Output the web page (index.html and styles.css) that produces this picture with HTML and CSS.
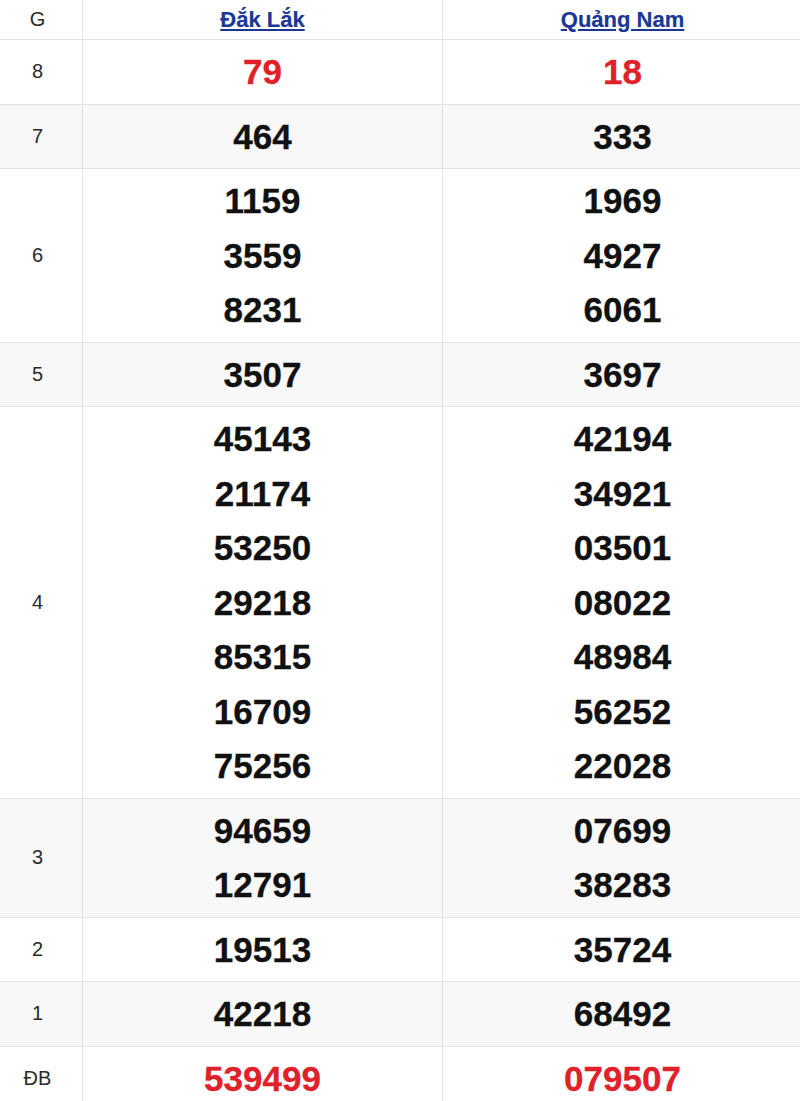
FILE: index.html
```html
<!DOCTYPE html>
<html lang="vi">
<head>
<meta charset="utf-8">
<title>Kết quả xổ số</title>
<link rel="stylesheet" href="styles.css">
</head>
<body>
<table class="kq">
  <thead>
    <tr>
      <th class="lbl">G</th>
      <th class="prov"><a href="#">Đắk Lắk</a></th>
      <th class="prov"><a href="#">Quảng Nam</a></th>
    </tr>
  </thead>
  <tbody>
    <tr>
      <td class="lbl">8</td>
      <td class="num red"><div>79</div></td>
      <td class="num red"><div>18</div></td>
    </tr>
    <tr>
      <td class="lbl">7</td>
      <td class="num"><div>464</div></td>
      <td class="num"><div>333</div></td>
    </tr>
    <tr>
      <td class="lbl">6</td>
      <td class="num"><div>1159</div><div>3559</div><div>8231</div></td>
      <td class="num"><div>1969</div><div>4927</div><div>6061</div></td>
    </tr>
    <tr>
      <td class="lbl">5</td>
      <td class="num"><div>3507</div></td>
      <td class="num"><div>3697</div></td>
    </tr>
    <tr>
      <td class="lbl">4</td>
      <td class="num"><div>45143</div><div>21174</div><div>53250</div><div>29218</div><div>85315</div><div>16709</div><div>75256</div></td>
      <td class="num"><div>42194</div><div>34921</div><div>03501</div><div>08022</div><div>48984</div><div>56252</div><div>22028</div></td>
    </tr>
    <tr>
      <td class="lbl">3</td>
      <td class="num"><div>94659</div><div>12791</div></td>
      <td class="num"><div>07699</div><div>38283</div></td>
    </tr>
    <tr>
      <td class="lbl">2</td>
      <td class="num"><div>19513</div></td>
      <td class="num"><div>35724</div></td>
    </tr>
    <tr>
      <td class="lbl">1</td>
      <td class="num"><div>42218</div></td>
      <td class="num"><div>68492</div></td>
    </tr>
    <tr>
      <td class="lbl">ĐB</td>
      <td class="num red"><div>539499</div></td>
      <td class="num red"><div>079507</div></td>
    </tr>
  </tbody>
</table>
</body>
</html>
```

FILE: styles.css
```css
html, body {
  margin: 0;
  padding: 0;
  background: #ffffff;
  overflow: hidden;
}

body {
  font-family: Arial, "Liberation Sans", Helvetica, sans-serif;
  color: #000;
}

.kq {
  border-collapse: collapse;
  table-layout: fixed;
  width: 802px;
}

.kq th,
.kq td {
  border-bottom: 1px solid #e2e2e2;
  border-right: 1px solid #e2e2e2;
  text-align: center;
  vertical-align: middle;
}

.kq th.lbl,
.kq td.lbl {
  width: 75px;
  padding: 0 7px 0 0;
  font-size: 20px;
  font-weight: normal;
  color: #2a2a2a;
}

.kq thead th {
  height: 39px;
  padding-top: 0;
  padding-bottom: 0;
  background: #fff;
}

.kq th.prov {
  width: 359px;
  padding: 0;
  font-size: 22px;
  font-weight: 700;
}

.prov a {
  color: #1a3796;
  text-decoration: underline;
  -webkit-text-stroke: 0.2px currentColor;
}

.kq tbody tr:nth-child(even) td {
  background: #f8f8f8;
}

.kq td.num {
  padding: 5px 0 4px;
  font-size: 35px;
  font-weight: 700;
  line-height: 54.5px;
  color: #111;
  -webkit-text-stroke: 0.3px currentColor;
}

.kq td.red {
  color: #e0212a;
}
```
